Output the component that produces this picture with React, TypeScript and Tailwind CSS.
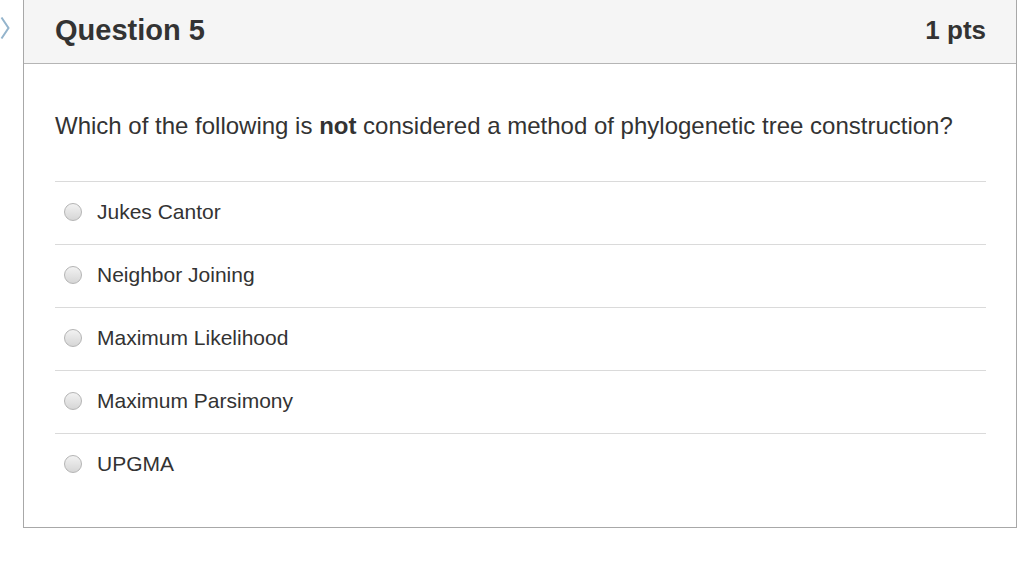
import React from 'react';

const options = ['Jukes Cantor', 'Neighbor Joining', 'Maximum Likelihood', 'Maximum Parsimony', 'UPGMA'];

const Radio = () => (
  <span className="inline-block w-[18px] h-[18px] rounded-full border border-[#b4b4b4] bg-gradient-to-b from-[#f2f2f2] to-[#d6d6d6] shrink-0" />
);

const App = () => {
  return (
    <div className="flex w-[1024px] h-[569px] bg-white text-[#333333]" style={{ fontFamily: '"Liberation Sans", Arial, sans-serif' }}>
      <div className="w-[23px] shrink-0 pt-[16px]">
        <svg width="11" height="24" viewBox="0 0 11 24" fill="none">
          <path d="M1.5 1.5 L8.5 12 L1.5 22.5" stroke="#94b4cc" strokeWidth="2" />
        </svg>
      </div>
      <div className="w-[994px] h-[528px] border-x border-b border-[#a8a8a8] flex flex-col">
        <div className="h-[64px] bg-[#f5f5f5] border-b border-[#b5b5b5] flex items-center justify-between pl-[31px] pr-[30px] pb-[3px]">
          <h2 className="text-[29px] font-bold text-[#333333] leading-none">Question 5</h2>
          <span className="text-[26px] font-bold text-[#333333] leading-none">1 pts</span>
        </div>
        <div className="pl-[31px] pr-[30px] pt-[48px]">
          <p className="text-[24px] leading-[28px] mb-[41px]">
            Which of the following is <b>not</b> considered a method of phylogenetic tree construction?
          </p>
          {options.map(o => (
            <div key={o} className="h-[63px] border-t border-[#dadada] flex items-center pl-[9px] gap-[15px] pb-[3px]">
              <Radio />
              <span className="text-[21px]">{o}</span>
            </div>
          ))}
        </div>
      </div>
    </div>
  );
};

export default App;
